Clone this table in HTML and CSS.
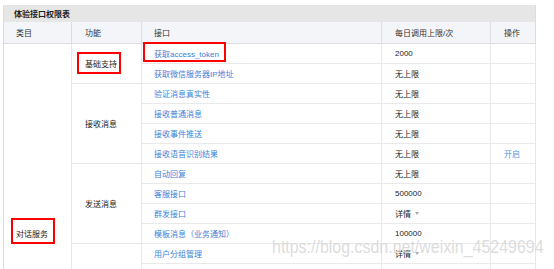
FILE: index.html
```html
<!DOCTYPE html>
<html lang="zh-CN">
<head>
<meta charset="utf-8">
<title>体验接口权限表</title>
<link rel="stylesheet" href="styles.css">
</head>
<body>
<div class="page">
  <div class="panel">
    <div class="title">体验接口权限表</div>
    <div class="grid">
      <div class="cell head c1">类目</div>
      <div class="cell head">功能</div>
      <div class="cell head c3">接口</div>
      <div class="cell head">每日调用上限/次</div>
      <div class="cell head">操作</div>

      <div class="cell cat c1 span19">对话服务</div>
      <div class="cell fn span2">基础支持</div>
      <div class="cell c3"><a>获取access_token</a></div><div class="cell">2000</div><div class="cell"></div>
      <div class="cell c3"><a>获取微信服务器IP地址</a></div><div class="cell">无上限</div><div class="cell"></div>

      <div class="cell fn span4">接收消息</div>
      <div class="cell c3"><a>验证消息真实性</a></div><div class="cell">无上限</div><div class="cell"></div>
      <div class="cell c3"><a>接收普通消息</a></div><div class="cell">无上限</div><div class="cell"></div>
      <div class="cell c3"><a>接收事件推送</a></div><div class="cell">无上限</div><div class="cell"></div>
      <div class="cell c3"><a>接收语音识别结果</a></div><div class="cell">无上限</div><div class="cell"><a class="op">开启</a></div>

      <div class="cell fn span4">发送消息</div>
      <div class="cell c3"><a>自动回复</a></div><div class="cell">无上限</div><div class="cell"></div>
      <div class="cell c3"><a>客服接口</a></div><div class="cell">500000</div><div class="cell"></div>
      <div class="cell c3"><a>群发接口</a></div><div class="cell">详情<span class="caret"></span></div><div class="cell"></div>
      <div class="cell c3"><a>模板消息（业务通知）</a></div><div class="cell">100000</div><div class="cell"></div>

      <div class="cell fn span9"></div>
      <div class="cell c3"><a>用户分组管理</a></div><div class="cell">详情<span class="caret"></span></div><div class="cell"></div>
      <div class="cell c3"></div><div class="cell"></div><div class="cell"></div>
      <div class="cell c3"></div><div class="cell"></div><div class="cell"></div>
      <div class="cell c3"></div><div class="cell"></div><div class="cell"></div>
      <div class="cell c3"></div><div class="cell"></div><div class="cell"></div>
      <div class="cell c3"></div><div class="cell"></div><div class="cell"></div>
      <div class="cell c3"></div><div class="cell"></div><div class="cell"></div>
      <div class="cell c3"></div><div class="cell"></div><div class="cell"></div>
      <div class="cell c3"></div><div class="cell"></div><div class="cell"></div>
    </div>
  </div>

  <div class="mark mark-fn"></div>
  <div class="mark mark-token"></div>
  <div class="mark mark-cat"></div>
  <div class="watermark">https://blog.csdn.net/weixin_45249694</div>
</div>
</body>
</html>
```
FILE: styles.css
```css
html, body {
  margin: 0;
  padding: 0;
  background: #fff;
  overflow: hidden;
}
body {
  width: 554px;
  height: 269px;
}
.page {
  position: relative;
  width: 554px;
  height: 269px;
  overflow: hidden;
  padding: 5px 0 0 3px;
  box-sizing: border-box;
  font-family: "Liberation Sans", "Noto Sans CJK SC", sans-serif;
  font-size: 8px;
  color: #333;
}
.panel {
  width: 533px;
}
.title {
  height: 17px;
  box-sizing: border-box;
  background: #e6e6e6;
  border-left: 1px solid #dcdcdc;
  border-right: 1px solid #dcdcdc;
  padding-left: 10px;
  display: flex;
  align-items: center;
  color: #222;
  font-weight: bold;
}
.grid {
  display: grid;
  grid-template-columns: 68px 70px 240px 109px 45px;
  grid-template-rows: 22px;
  grid-auto-rows: 20px;
  border-left: 1px solid #dcdcdc;
}
.cell {
  box-sizing: border-box;
  border-right: 1px solid #e6e6e6;
  border-bottom: 1px solid #e9e9e9;
  display: flex;
  align-items: center;
  padding-left: 13px;
  white-space: nowrap;
  color: #222;
}
.head {
  background: #f4f5f9;
  border-right-color: #dcdcdc;
  border-bottom-color: #dcdcdc;
  color: #333;
}
.c1 { padding-left: 12px; }
.c3 { padding-left: 12px; }
.cat, .fn {
  border-bottom-color: #e6e6e6;
}
.span19 { grid-row: span 19; }
.span2 { grid-row: span 2; }
.span4 { grid-row: span 4; }
.span9 { grid-row: span 9; }
a {
  color: #3b82d9;
  text-decoration: none;
}
a.op {
  color: #4d92e6;
}
.caret {
  display: inline-block;
  width: 0;
  height: 0;
  margin-left: 4px;
  border-left: 2.5px solid transparent;
  border-right: 2.5px solid transparent;
  border-top: 3px solid #aaa;
}
.mark {
  position: absolute;
  border: 2px solid #f00;
  box-sizing: border-box;
}
.mark-fn { left: 77px; top: 52px; width: 44px; height: 22px; }
.mark-token { left: 143px; top: 42px; width: 83px; height: 20px; }
.mark-cat { left: 11px; top: 218px; width: 44px; height: 26px; }
.watermark {
  position: absolute;
  left: 272px;
  top: 236px;
  font-family: "Liberation Sans", sans-serif;
  font-size: 19px;
  line-height: 22px;
  color: rgba(185, 185, 185, 0.5);
  text-shadow: 0 0 1px rgba(255, 255, 255, 0.7);
  transform: scaleX(0.84);
  transform-origin: left top;
  white-space: nowrap;
  pointer-events: none;
}
```
